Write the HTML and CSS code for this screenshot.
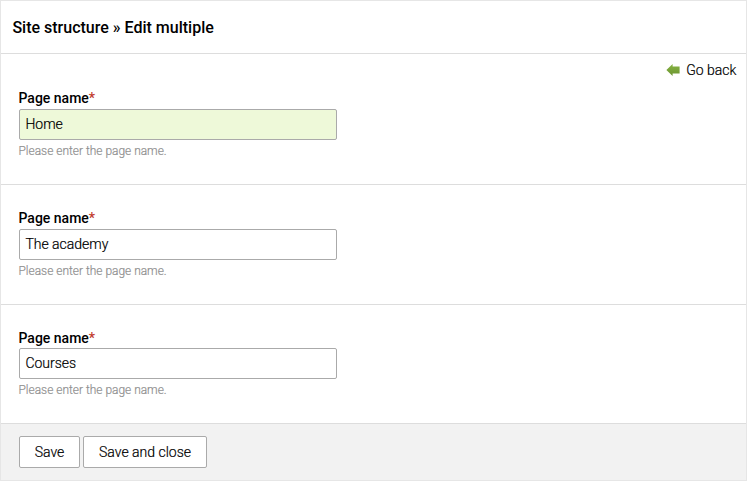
FILE: index.html
```
<!DOCTYPE html>
<html lang="en">
<head>
<meta charset="utf-8">
<title>Site structure</title>
<link rel="stylesheet" href="styles.css">
</head>
<body>
<main class="panel">
  <h1 class="title">Site structure » Edit multiple</h1>
  <form class="form">
    <section class="record first">
      <div class="field">
        <label class="label" for="p1">Page name<span class="required">*</span></label>
        <input class="input active" id="p1" type="text" value="Home">
        <p class="help">Please enter the page name.</p>
      </div>
      <a class="back"><svg class="arrow" width="14" height="12" viewBox="0 0 14 12"><defs><linearGradient id="g" x1="0" y1="0" x2="0" y2="1"><stop offset="0" stop-color="#87b342"/><stop offset="1" stop-color="#6b9430"/></linearGradient></defs><path fill="url(#g)" d="M.4 6 6.6 0V2.6H13.6V9.4H6.6V12Z"/></svg><span>Go back</span></a>
    </section>
    <section class="record">
      <div class="field">
        <label class="label" for="p2">Page name<span class="required">*</span></label>
        <input class="input" id="p2" type="text" value="The academy">
        <p class="help">Please enter the page name.</p>
      </div>
    </section>
    <section class="record last">
      <div class="field">
        <label class="label" for="p3">Page name<span class="required">*</span></label>
        <input class="input" id="p3" type="text" value="Courses">
        <p class="help">Please enter the page name.</p>
      </div>
    </section>
    <footer class="actions">
      <button class="button save" type="button">Save</button>
      <button class="button close" type="button">Save and close</button>
    </footer>
  </form>
</main>
</body>
</html>
```

FILE: styles.css
```
* { box-sizing: border-box; }
body {
  margin: 0;
  background: #fff;
  color: #000;
  font: 300 14px/18px Roboto, sans-serif;
  -webkit-text-stroke: 0.2px;
}
.panel {
  display: flex;
  flex-direction: column;
  height: 481px;
  border: 1px solid #e6e6e6;
}
.title {
  flex: none;
  height: 53px;
  margin: 0;
  padding-left: 11.4px;
  border-bottom: 1px solid #ddd;
  font-size: 16px;
  font-weight: 500;
  line-height: 53px;
  -webkit-text-stroke: 0;
}
.form { display: flex; flex: 1; flex-direction: column; }
.record {
  display: flex;
  justify-content: space-between;
  height: 120px;
  padding: 24px 9.6px 0 18px;
  border-bottom: 1px solid #ddd;
}
.first { height: 131px; padding-top: 35px; }
.last { height: 119px; }
.field { width: 318px; }
.label {
  display: block;
  height: 20px;
  margin-left: -0.5px;
  font-size: 14px;
  font-weight: 500;
  -webkit-text-stroke: 0;
}
.last .label { height: 19px; }
.required { color: #c0392b; }
.input {
  display: block;
  width: 318px;
  height: 31px;
  padding: 0 5px 2px 5.4px;
  border: 1px solid #aaa;
  border-radius: 2px;
  outline: 0;
  background: #fff;
  color: #000;
  font: inherit;
  -webkit-text-stroke: 0.2px;
}
.active { background: #eef9d9; }
.help {
  margin: 2px 0 0 -0.5px;
  color: #909090;
  font-size: 11.95px;
}
.back {
  display: flex;
  align-items: center;
  gap: 6px;
  height: 18px;
  margin-top: -28px;
}
.actions {
  display: flex;
  flex: 1;
  gap: 3px;
  padding: 12px 0 0 18px;
  background: #f2f2f2;
}
.button {
  height: 32px;
  padding: 0 0 1px;
  border: 1px solid #aaa;
  border-radius: 2px;
  background: #fff;
  color: #000;
  font: inherit;
  -webkit-text-stroke: 0.2px;
}
.save { width: 61px; }
.close { width: 124px; }
```
